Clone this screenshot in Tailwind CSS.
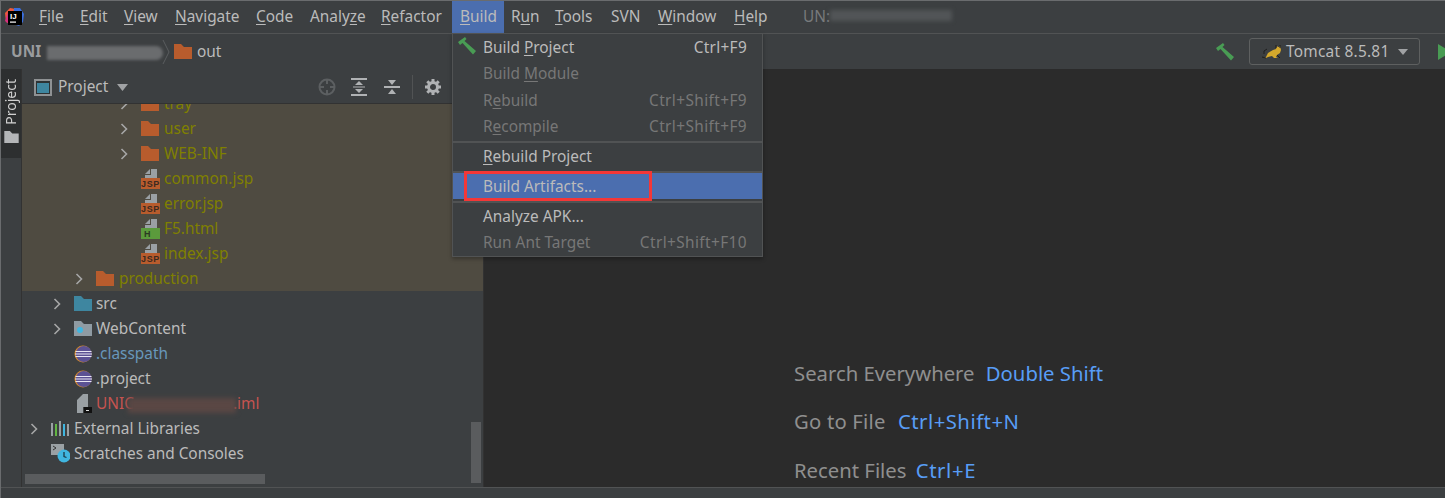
<!DOCTYPE html>
<html lang="en">
<head>
  <meta charset="UTF-8">
  <title>IDE Build menu</title>
  <script src="https://cdn.jsdelivr.net/npm/@tailwindcss/browser@4"></script>
</head>
<body class="bg-[#3c3f41] h-[498px] w-[1445px] overflow-hidden font-['Noto_Sans',sans-serif] text-[15.4px] text-[#bbbbbb]">
  <svg class="hidden">
    <symbol id="folder" viewBox="0 0 18 15"><path d="M0 0h7l3 3h8v12H0z" fill="currentColor"/></symbol>
    <symbol id="chev" viewBox="0 0 10 14"><path d="M2.500 2l5 5-5 5" fill="none" stroke="#a6a6a6" stroke-width="1.600"/></symbol>
    <symbol id="hammer" viewBox="0 0 20 18"><path d="M1 5L8 0l1.500 2-2 2L19 14l-3 3.500L5.500 6 3 8z" fill="#499c54"/></symbol>
    <symbol id="jsp" viewBox="0 0 19 20">
      <path d="M10 0h6v9H4V6h6z" fill="#9aa0a4"/><path d="M4 5l5-5v5z" fill="#9aa0a4"/>
      <rect y="9" width="19" height="11" fill="#b85c2d"/>
      <text x="9.500" y="18" text-anchor="middle" font-size="9" font-weight="700" letter-spacing=".6" fill="#3c2a20" font-family="Liberation Sans">JSP</text>
    </symbol>
    <symbol id="eclipse" viewBox="0 0 18 18">
      <circle cx="9" cy="9" r="8.500" fill="#d78a2c"/><circle cx="9.800" cy="9" r="8" fill="#5c5294"/>
      <path d="M1.500 6.500h16M1 9h17M1.500 11.500h16" stroke="#e8e6f2" stroke-width="1.200"/>
    </symbol>
  </svg>

  <div class="relative h-[498px] flex flex-col border-t border-l border-[#6a6c6e]">
    <!-- Menu bar -->
    <div class="h-[33px] shrink-0 flex items-center border-b border-[#515354]">
      <svg class="ml-[3px] w-[20px] h-[20px] shrink-0" viewBox="0 0 20 20">
        <path d="M1 6l5-5 6 1-6 15-4-2z" fill="#ef5a3c"/>
        <path d="M1 14l3-9 4 2-2 11z" fill="#d6307f"/>
        <path d="M10 1l6 0 4 6-1 8-4 4-6-2z" fill="#3a6fe0"/>
        <rect x="4" y="4" width="14" height="14" fill="#000"/>
        <rect x="6" y="14.500" width="6" height="1.200" fill="#fff"/>
        <text x="6" y="11.500" font-size="8" font-weight="700" fill="#fff" font-family="Liberation Sans">IJ</text>
      </svg>
      <div class="flex items-center h-full ml-[15px]">
        <span class="w-[41px]"><u class="underline-offset-2">F</u>ile</span>
        <span class="w-[44px]"><u class="underline-offset-2">E</u>dit</span>
        <span class="w-[51px]"><u class="underline-offset-2">V</u>iew</span>
        <span class="w-[81px]"><u class="underline-offset-2">N</u>avigate</span>
        <span class="w-[54px]"><u class="underline-offset-2">C</u>ode</span>
        <span class="w-[71px]">Analy<u class="underline-offset-2">z</u>e</span>
        <span class="w-[71px]"><u class="underline-offset-2">R</u>efactor</span>
        <span class="w-[52px] h-full bg-[#4b6eaf] flex items-center pl-[8px] whitespace-pre"><u class="underline-offset-2">B</u>uild</span>
        <span class="w-[44px] ml-[7px]">R<u class="underline-offset-2">u</u>n</span>
        <span class="w-[56px]"><u class="underline-offset-2">T</u>ools</span>
        <span class="w-[47px]">SVN</span>
        <span class="w-[76px]"><u class="underline-offset-2">W</u>indow</span>
        <span class="w-[69px]"><u class="underline-offset-2">H</u>elp</span>
        <span class="text-[#787a7c]">UN:</span>
        <div class="w-[122px] h-[11px] bg-[#525557] blur-[2px] -mt-[3px]"></div>
      </div>
    </div>

    <!-- Navigation bar -->
    <div class="h-[35px] shrink-0 flex items-center pl-[10px] overflow-hidden">
      <span class="font-bold text-[#9a9c9e] w-[40px]">UNI</span>
      <div class="w-[116px] h-[14px] -ml-[4px] mt-[2px] bg-[#6a6c6e] blur-[1.500px] rounded-r-full"></div>
      <svg class="w-[9px] h-[26px] -ml-[1px] shrink-0" viewBox="0 0 9 26"><path d="M1 1l6 12-6 12" fill="none" stroke="#5a5d5f"/></svg>
      <svg class="w-[18px] h-[15px] ml-[3px] text-[#b85c2d]"><use href="#folder"/></svg>
      <span class="ml-[5px]">out</span>
      <svg class="w-[20px] h-[18px] ml-auto"><use href="#hammer"/></svg>
      <div class="ml-[14px] w-[171px] h-[27px] border border-[#5e6060] rounded-[3px] flex items-center pl-[12px]">
        <svg class="w-[20px] h-[15px]" viewBox="0 0 20 15">
          <path d="M1 14l3-1 2-4 5-3 3-1 1-3 1 1h1l1-1 1 4-1 3-3 2-1 2 2 1-4 0-2-2-4 1-2 1z" fill="#d4a82c"/>
          <path d="M0 13l4 1M5 5L2 7l0 3M14 1v3M18 1v3M15 11l3 3" stroke="#1e1e1e" fill="none"/>
        </svg>
        <span class="ml-[4px] tracking-[.25px]">Tomcat 8.5.81</span>
        <svg class="w-[10px] h-[6px] ml-[9px]" viewBox="0 0 10 6"><path d="M0 0h10L5 6z" fill="#a0a2a4"/></svg>
      </div>
      <svg class="w-[7px] h-[16px] ml-[18px] shrink-0" viewBox="0 0 7 16"><path d="M0 0l13 8-13 8z" fill="#499c54"/></svg>
    </div>

    <div class="flex-1 flex min-h-0">
      <!-- Tool window strip -->
      <div class="w-[21px] shrink-0 border-r border-[#323232]">
        <div class="h-[89px] bg-[#2d2f30] flex flex-col items-center pt-[10px] text-[#d0d0d0] text-[14px]">
          <span class="[writing-mode:vertical-rl] rotate-180 leading-[20px]">Project</span>
          <svg class="w-[15px] h-[12px] mt-[6px] text-[#b4b6b8]"><use href="#folder"/></svg>
        </div>
      </div>

      <!-- Project panel -->
      <div class="relative w-[461px] shrink-0 flex flex-col">
        <div class="relative z-10 h-[35px] shrink-0 flex items-center bg-[#3c3f41] border-b border-[#323232] pl-[12px] pt-[2px]">
          <svg class="w-[18px] h-[17px]" viewBox="0 0 18 17"><rect x="1" y="1" width="16" height="15" fill="#2d3234" stroke="#8f9294" stroke-width="2"/><rect x="3" y="4" width="12" height="10" fill="#3e86a0"/></svg>
          <span class="ml-[6px]">Project</span>
          <svg class="w-[11px] h-[7px] ml-[9px]" viewBox="0 0 11 7"><path d="M0 0h11L5.500 7z" fill="#a0a2a4"/></svg>
          <svg class="w-[18px] h-[18px] ml-[190px]" viewBox="0 0 18 18"><circle cx="9" cy="9" r="7.500" fill="none" stroke="#5c5f61" stroke-width="2"/><path d="M9 1v5M9 12v5M1 9h5M12 9h5" stroke="#5c5f61" stroke-width="2"/></svg>
          <svg class="w-[16px] h-[18px] ml-[15px]" viewBox="0 0 16 18"><path d="M0 1h16M0 17h16" stroke="#b0b2b4" stroke-width="2"/><path d="M8 3l4 4H4zM8 15l4-4H4z" fill="#b0b2b4"/><path d="M2 9h12" stroke="#b0b2b4"/></svg>
          <svg class="w-[16px] h-[16px] ml-[17px]" viewBox="0 0 16 16"><path d="M0 8h16" stroke="#b0b2b4" stroke-width="2"/><path d="M8 6L4 1h8zM8 10l4 5H4z" fill="#b0b2b4"/></svg>
          <div class="w-px h-[24px] bg-[#515354] ml-[12px]"></div>
          <svg class="w-[16px] h-[16px] ml-[12px]" viewBox="0 0 16 16"><circle cx="8" cy="8" r="4.500" fill="none" stroke="#b0b2b4" stroke-width="3"/><path d="M8 0v3M8 13v3M0 8h3M13 8h3M2.300 2.300l2.200 2.200M11.500 11.500l2.200 2.200M13.700 2.300l-2.200 2.200M4.500 11.500l-2.200 2.200" stroke="#b0b2b4" stroke-width="3"/></svg>
        </div>

        <div class="flex-1 min-h-0 overflow-hidden">
          <div class="-mt-[13px]">
            <!-- out folder (changed files tint) -->
            <div class="bg-[#4f4b41] text-[#808000]">
              <div class="h-[25px] flex items-center pl-[97px]"><svg class="w-[10px] h-[14px] mr-[12px]"><use href="#chev"/></svg><svg class="w-[18px] h-[15px] mr-[5px] text-[#b85c2d]"><use href="#folder"/></svg>tray</div>
              <div class="h-[25px] flex items-center pl-[97px]"><svg class="w-[10px] h-[14px] mr-[12px]"><use href="#chev"/></svg><svg class="w-[18px] h-[15px] mr-[5px] text-[#b85c2d]"><use href="#folder"/></svg>user</div>
              <div class="h-[25px] flex items-center pl-[97px]"><svg class="w-[10px] h-[14px] mr-[12px]"><use href="#chev"/></svg><svg class="w-[18px] h-[15px] mr-[5px] text-[#b85c2d]"><use href="#folder"/></svg>WEB-INF</div>
              <div class="h-[25px] flex items-center pl-[119px]"><svg class="w-[19px] h-[20px] mr-[4px]"><use href="#jsp"/></svg>common.jsp</div>
              <div class="h-[25px] flex items-center pl-[119px]"><svg class="w-[19px] h-[20px] mr-[4px]"><use href="#jsp"/></svg>error.jsp</div>
              <div class="h-[25px] flex items-center pl-[119px]">
                <svg class="w-[19px] h-[20px] mr-[4px]" viewBox="0 0 19 20">
                  <path d="M10 0h6v9H4V6h6z" fill="#9aa0a4"/><path d="M4 5l5-5v5z" fill="#9aa0a4"/>
                  <rect y="9" width="19" height="11" fill="#5b9a3c"/>
                  <text x="3" y="18" font-size="9" font-weight="700" fill="#2c3a22" font-family="Liberation Sans">H</text>
                </svg>F5.html</div>
              <div class="h-[25px] flex items-center pl-[119px]"><svg class="w-[19px] h-[20px] mr-[4px]"><use href="#jsp"/></svg>index.jsp</div>
              <div class="h-[25px] flex items-center pl-[52px]"><svg class="w-[10px] h-[14px] mr-[12px]"><use href="#chev"/></svg><svg class="w-[18px] h-[15px] mr-[5px] text-[#b85c2d]"><use href="#folder"/></svg>production</div>
            </div>
            <!-- project root -->
            <div class="h-[25px] flex items-center pl-[30px]"><svg class="w-[10px] h-[14px] mr-[12px]"><use href="#chev"/></svg><svg class="w-[18px] h-[15px] mr-[4px] text-[#3e86a0]"><use href="#folder"/></svg>src</div>
            <div class="h-[25px] flex items-center pl-[30px]"><svg class="w-[10px] h-[14px] mr-[12px]"><use href="#chev"/></svg>
              <svg class="w-[18px] h-[15px] mr-[4px]" viewBox="0 0 18 15"><path d="M0 0h7l3 3h8v12H0z" fill="#8f9ba3"/><circle cx="6" cy="9" r="3" fill="#40b6e0"/></svg>WebContent</div>
            <div class="h-[25px] flex items-center pl-[52px] text-[#6897bb]"><svg class="w-[18px] h-[18px] mr-[4px]"><use href="#eclipse"/></svg>.classpath</div>
            <div class="h-[25px] flex items-center pl-[52px]"><svg class="w-[18px] h-[18px] mr-[4px]"><use href="#eclipse"/></svg>.project</div>
            <div class="h-[25px] flex items-center pl-[52px] text-[#c75450]">
              <svg class="w-[18px] h-[19px] mr-[4px]" viewBox="0 0 18 19"><path d="M3 6l6-6h5v13H9v6H3z" fill="#9aa0a4"/><rect x="10" y="13" width="8" height="6" fill="#111"/><rect x="12" y="16" width="3" height="1" fill="#ddd"/></svg>
              <span>UNIC</span>
              <div class="w-[108px] h-[15px] bg-[#5a4744] blur-[2.500px] mt-[3px] -ml-[6px]"></div>
              <span class="-ml-[3px]">.iml</span>
            </div>
            <div class="h-[25px] flex items-center pl-[7px]"><svg class="w-[10px] h-[14px] mr-[12px]"><use href="#chev"/></svg>
              <svg class="w-[18px] h-[15px] mr-[5px]" viewBox="0 0 18 15"><path d="M1 2v13" stroke="#9aa0a4" stroke-width="2"/><path d="M5 3v12" stroke="#62b543" stroke-width="2"/><path d="M9 0v15" stroke="#9aa0a4" stroke-width="2"/><path d="M13 3v12" stroke="#40b6e0" stroke-width="2"/><path d="M17 3v12" stroke="#9aa0a4" stroke-width="2"/></svg>External Libraries</div>
            <div class="h-[25px] flex items-center pl-[29px]">
              <svg class="w-[19px] h-[19px] mr-[4px]" viewBox="0 0 19 19"><rect y="0" width="13" height="11" fill="#9aa0a4"/><path d="M2 2l3 2-3 2" fill="none" stroke="#333"/><circle cx="13" cy="12" r="6.500" fill="#40b6e0"/><path d="M13 8v4.500l2.500 1" fill="none" stroke="#1c3a48" stroke-width="1.300"/></svg>Scratches and Consoles</div>
          </div>
        </div>
        <!-- overlay scrollbars -->
        <div class="absolute left-[449px] top-[353px] w-[10px] h-[61px] bg-[#5a5c5e]"></div>
        <div class="absolute left-[3px] top-[405px] w-[240px] h-[10px] bg-[#5a5c5e]"></div>
      </div>

      <!-- Editor area -->
      <div class="flex-1 bg-[#2b2b2b] border-l border-[#323232] pl-[310px] pt-[285px] text-[20.300px] text-[#8f8f8f] overflow-hidden">
        <div class="h-[48px] leading-[39px]">Search Everywhere <span class="ml-[6px] text-[#589df6]">Double Shift</span></div>
        <div class="h-[49px] leading-[39px]"><span class="tracking-[.2px]">Go to File</span> <span class="ml-[7px] text-[#589df6] tracking-[.5px]">Ctrl+Shift+N</span></div>
        <div class="h-[49px] leading-[39px]">Recent Files <span class="ml-[4px] text-[#589df6] tracking-[.6px]">Ctrl+E</span></div>
      </div>
    </div>

    <!-- Bottom bar -->
    <div class="h-[11px] shrink-0 border-t border-[#515354]"></div>

    <!-- Build dropdown -->
    <div class="absolute left-[451px] top-[32px] w-[311px] h-[224px] z-20 pt-[1px] bg-[#3c3f41] border border-[#515354] shadow-[0_2px_4px_rgba(0,0,0,0.3)]">
      <div class="h-[26px] flex items-center pl-[30px] pr-[15px] justify-between relative">
        <svg class="absolute left-[4px] top-[2px] w-[20px] h-[18px]"><use href="#hammer"/></svg>
        <span>Build <u class="underline-offset-2">P</u>roject</span><span class="tracking-[.3px]">Ctrl+F9</span>
      </div>
      <div class="h-[26px] flex items-center pl-[30px] pr-[15px] text-[#777777]"><span>Build <u class="underline-offset-2">M</u>odule</span></div>
      <div class="h-[27px] flex items-center pl-[30px] pr-[15px] justify-between text-[#777777]"><span>R<u class="underline-offset-2">e</u>build</span><span class="tracking-[.4px]">Ctrl+Shift+F9</span></div>
      <div class="h-[26px] flex items-center pl-[30px] pr-[15px] justify-between text-[#777777]"><span>R<u class="underline-offset-2">e</u>compile</span><span class="tracking-[.4px]">Ctrl+Shift+F9</span></div>
      <div class="h-[2px] mt-[1px] bg-[#515354] mb-[1px]"></div>
      <div class="h-[26px] flex items-center pl-[30px] pr-[15px]"><span><u class="underline-offset-2">R</u>ebuild Project</span></div>
      <div class="h-[2px] mt-[1px] bg-[#515354]"></div>
      <div class="h-[26px] flex items-center pl-[30px] pr-[15px] pt-[2px] bg-[#4b6eaf] relative">
        <span>Build Artifacts...</span>
        <div class="absolute left-[11px] -top-[2px] w-[188px] h-[30px] border-[3px] border-[#f33737]"></div>
      </div>
      <div class="h-[2px] mt-[2px] bg-[#515354] mb-[1px]"></div>
      <div class="h-[26px] flex items-center pl-[30px] pr-[15px]"><span>Analyze APK...</span></div>
      <div class="h-[26px] flex items-center pl-[30px] pr-[15px] justify-between text-[#777777]"><span>Run Ant Target</span><span class="tracking-[.4px]">Ctrl+Shift+F10</span></div>
    </div>
  </div>
</body>
</html>
